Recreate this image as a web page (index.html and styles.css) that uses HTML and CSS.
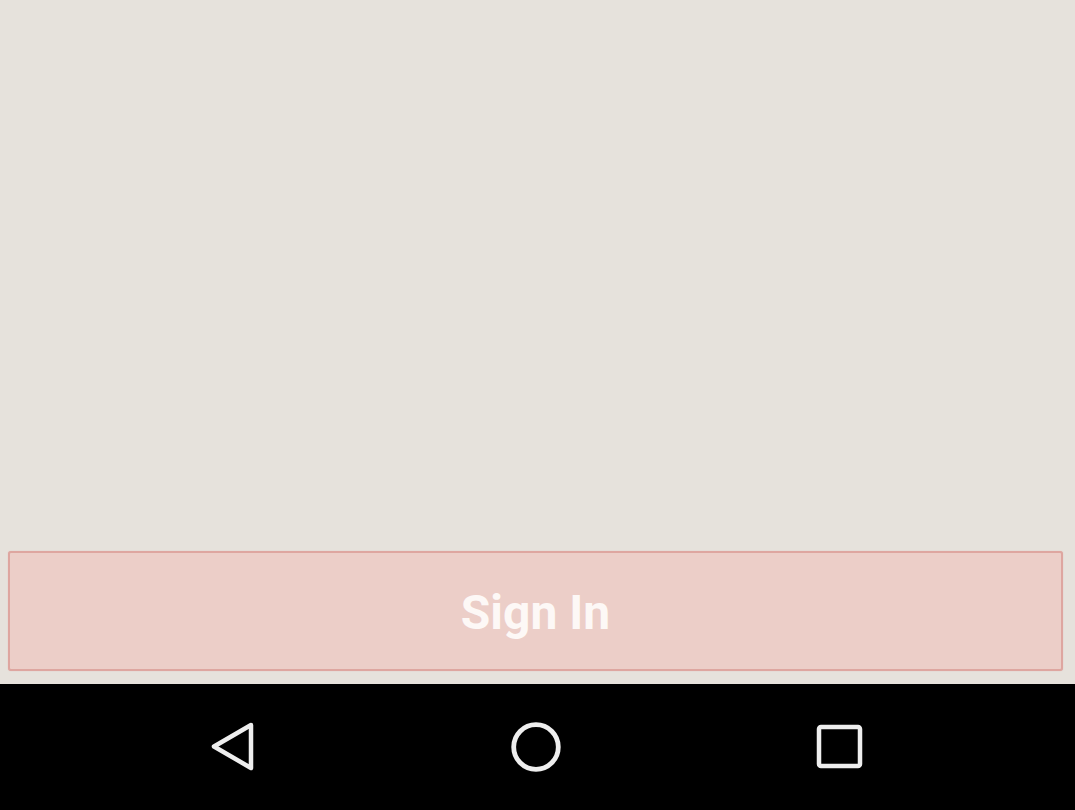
FILE: index.html
```html
<!DOCTYPE html>
<html>
<head>
<meta charset="utf-8">
<link rel="stylesheet" href="styles.css">
</head>
<body>
<div class="screen">
  <main class="content"></main>
  <div class="actions">
    <button class="signin">Sign In</button>
  </div>
  <nav class="navbar">
    <svg class="nav-icon" width="48" height="50" viewBox="0 0 48 50">
      <path d="M43 3 L6 24.5 L43 46 Z" fill="none" stroke="#eeeeee" stroke-width="4.5" stroke-linejoin="round"/>
    </svg>
    <svg class="nav-icon" width="50" height="50" viewBox="0 0 50 50">
      <circle cx="25" cy="25" r="22.3" fill="none" stroke="#eeeeee" stroke-width="4.8"/>
    </svg>
    <svg class="nav-icon" width="48" height="50" viewBox="0 0 48 50">
      <rect x="3" y="5" width="41" height="39" rx="2" fill="none" stroke="#eeeeee" stroke-width="4.5"/>
    </svg>
  </nav>
</div>
</body>
</html>
```
FILE: styles.css
```css
html, body {
  margin: 0;
  padding: 0;
}
body {
  background: #e6e2dc;
  font-family: Roboto, "Liberation Sans", sans-serif;
}
.screen {
  width: 1075px;
  height: 810px;
  display: flex;
  flex-direction: column;
}
.content {
  flex: 1;
}
.actions {
  padding: 0 12px 13px 8px;
}
.signin {
  display: block;
  width: 100%;
  height: 120px;
  margin: 0;
  background: #eccec8;
  border: 2px solid #dea6a0;
  border-radius: 3px;
  box-shadow: 0 0 1px #e0b0aa;
  color: #fdf8f6;
  font-family: Roboto, "Liberation Sans", sans-serif;
  font-weight: 700;
  font-size: 48px;
  padding: 2px 0 0 0;
}
.navbar {
  height: 126px;
  background: #000;
  display: flex;
  align-items: center;
  justify-content: center;
  gap: 255px;
  padding-right: 4px;
}
.nav-icon {
  display: block;
}
```
